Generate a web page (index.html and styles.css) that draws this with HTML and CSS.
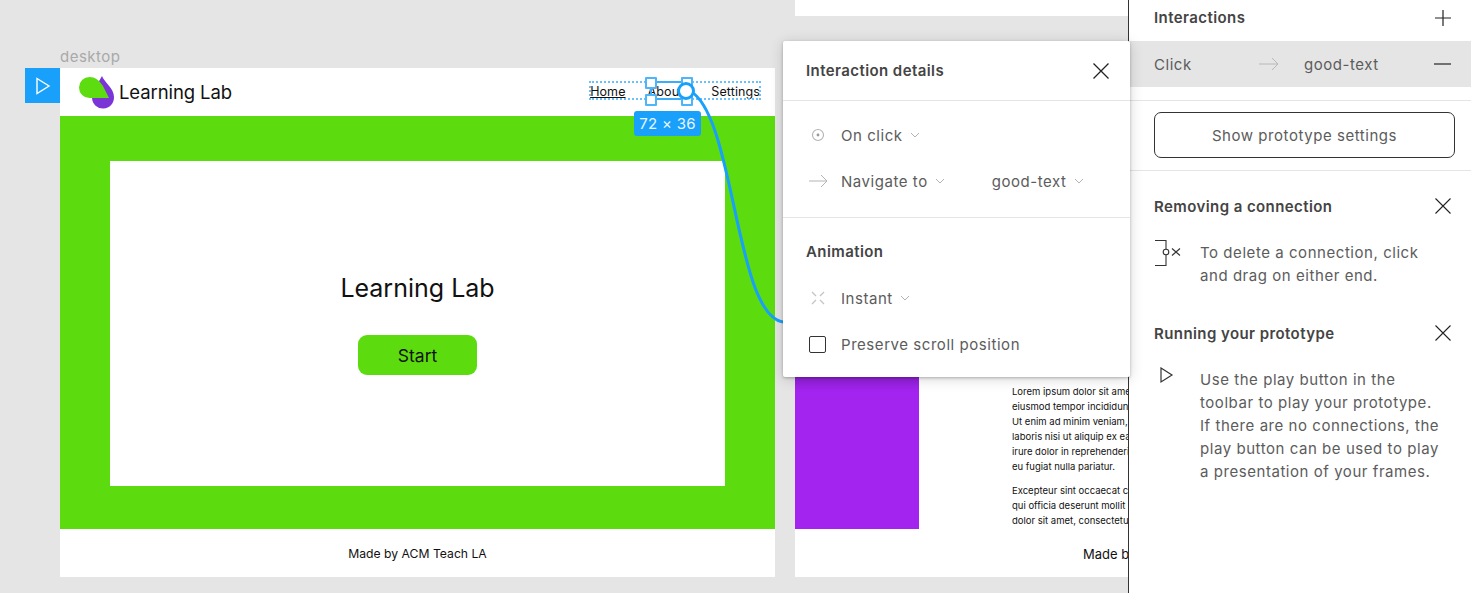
FILE: index.html
```html
<!DOCTYPE html>
<html lang="en">
  <head>
    <meta charset="UTF-8" />
    <title>Prototype</title>
    <link rel="stylesheet" href="styles.css">
  </head>
  <body>
    <main class="canvas">
      <div class="stubFrame"></div>
      <div class="frameLabel">desktop</div>
      <div class="flowTag">
        <svg width="16" height="18" viewBox="0 0 16 18"><path d="M2 1.500 14 9 2 16.500Z" fill="none" stroke="#fff" stroke-width="1.400"/></svg>
      </div>

      <section class="frame desktopFrame">
        <header class="siteHeader">
          <div class="brand">
            <svg width="36" height="33" viewBox="0 0 36 33">
              <path d="M23 0C25 6 35 12 35 21A11 11 0 0 1 13 22L16 12Z" fill="#7b35d6"/>
              <path d="M10.500 1C16 1 20 4 24 10L30 22H10.500A10.500 10.500 0 0 1 10.500 1Z" fill="#5ddc0f"/>
            </svg>
            <span>Learning Lab</span>
          </div>
          <nav class="siteNav">
            <a class="isCurrent">Home</a>
            <a>About</a>
            <a>Settings</a>
          </nav>
        </header>
        <div class="hero">
          <div class="heroCard">
            <h1>Learning Lab</h1>
            <div class="startBtn">Start</div>
          </div>
        </div>
        <footer class="siteFooter">Made by ACM Teach LA</footer>
      </section>

      <section class="frame textFrame">
        <div class="textBody">
          <div class="purpleCol"></div>
          <div class="lorem">
            <p>Lorem ipsum dolor sit amet, consectetur adipiscing<br>eiusmod tempor incididunt ut labore et dolore<br>Ut enim ad minim veniam, quis nostrud<br>laboris nisi ut aliquip ex ea commodo<br>irure dolor in reprehenderit in voluptate<br>eu fugiat nulla pariatur.</p>
            <p>Excepteur sint occaecat cupidatat non<br>qui officia deserunt mollit anim id est<br>dolor sit amet, consectetur adipiscing</p>
          </div>
        </div>
        <footer class="siteFooter footerShift">Made by ACM Teach LA</footer>
      </section>

      <div class="selDotted"></div>
      <div class="selBox"></div>
      <div class="handle h1"></div>
      <div class="handle h2"></div>
      <div class="handle h3"></div>
      <div class="handle h4"></div>
      <div class="sizeBadge">72 × 36</div>
      <svg class="wire" width="1471" height="593" viewBox="0 0 1471 593">
        <path d="M690 91C735 115 735 315 783 322" fill="none" stroke="#18a0fb" stroke-width="3"/>
        <circle cx="686" cy="91" r="7.500" fill="#fff" stroke="#18a0fb" stroke-width="3"/>
      </svg>
    </main>

    <aside class="popover">
      <div class="popHead">
        <span>Interaction details</span>
        <svg class="icon" width="18" height="18" viewBox="0 0 18 18"><path d="M1.500 1.500 16.500 16.500M16.500 1.500 1.500 16.500" stroke="#222" stroke-width="1.300"/></svg>
      </div>
      <div class="popSection popFirst">
        <div class="popRow">
          <span class="rowIcon"><svg class="smallIcon" width="14" height="14" viewBox="0 0 14 14"><circle cx="7" cy="7" r="5.500" fill="none" stroke="#b3b3b3" stroke-width="1.100"/><circle cx="7" cy="7" r="1.400" fill="#999"/></svg></span>
          <span>On click</span>
          <svg class="chev" width="10" height="6" viewBox="0 0 10 6"><path d="M1 1 5 5 9 1" fill="none" stroke="#b3b3b3" stroke-width="1"/></svg>
        </div>
        <div class="popRow">
          <span class="rowIcon"><svg width="20" height="14" viewBox="0 0 20 14"><path d="M1 7H19M13 1 19 7 13 13" fill="none" stroke="#b3b3b3" stroke-width="1"/></svg></span>
          <span>Navigate to</span>
          <svg class="chev" width="10" height="6" viewBox="0 0 10 6"><path d="M1 1 5 5 9 1" fill="none" stroke="#b3b3b3" stroke-width="1"/></svg>
          <span class="target">good-text</span>
          <svg class="chev" width="10" height="6" viewBox="0 0 10 6"><path d="M1 1 5 5 9 1" fill="none" stroke="#b3b3b3" stroke-width="1"/></svg>
        </div>
      </div>
      <div class="popSection">
        <h3 class="popTitle">Animation</h3>
        <div class="popRow">
          <span class="rowIcon"><svg class="smallIcon" width="14" height="14" viewBox="0 0 14 14"><path d="M1 1 5 5M13 1 9 5M1 13 5 9M13 13 9 9" fill="none" stroke="#c4c4c4" stroke-width="1.300"/></svg></span>
          <span>Instant</span>
          <svg class="chev" width="10" height="6" viewBox="0 0 10 6"><path d="M1 1 5 5 9 1" fill="none" stroke="#b3b3b3" stroke-width="1"/></svg>
        </div>
        <div class="popRow">
          <span class="rowIcon"><span class="checkbox"></span></span>
          <span>Preserve scroll position</span>
        </div>
      </div>
    </aside>

    <aside class="panel">
      <div class="panelTop">
        <div class="panelHead">
          <span>Interactions</span>
          <svg width="16" height="16" viewBox="0 0 16 16"><path d="M8 0V16M0 8H16" stroke="#222" stroke-width="1.200"/></svg>
        </div>
        <div class="interaction">
          <span class="trigger">Click</span>
          <svg class="arrow" width="20" height="14" viewBox="0 0 20 14"><path d="M0 7H19M13 1 19 7 13 13" fill="none" stroke="#b8b8b8" stroke-width="1"/></svg>
          <span class="dest">good-text</span>
          <svg class="minus" width="17" height="2" viewBox="0 0 17 2"><path d="M0 1H17" stroke="#222" stroke-width="1.200"/></svg>
        </div>
      </div>
      <div class="panelBtnWrap">
        <div class="protoBtn">Show prototype settings</div>
      </div>
      <div class="tips">
        <div class="tip">
          <div class="tipHead">
            <span>Removing a connection</span>
            <svg width="16" height="16" viewBox="0 0 16 16"><path d="M.5.5 15.500 15.500M15.500.5.5 15.500" stroke="#222" stroke-width="1.100"/></svg>
          </div>
          <div class="tipBody">
            <svg class="tipIcon" width="28" height="28" viewBox="0 0 28 28"><path d="M1 1.500H12V10M12 16V26.500H1" fill="none" stroke="#333" stroke-width="1.100"/><circle cx="12" cy="13" r="2.800" fill="none" stroke="#333" stroke-width="1.100"/><path d="M18 9.500 26 16.500M26 9.500 18 16.500" stroke="#333" stroke-width="1.100"/></svg>
            <p>To delete a connection, click<br>and drag on either end.</p>
          </div>
        </div>
        <div class="tip">
          <div class="tipHead">
            <span>Running your prototype</span>
            <svg width="16" height="16" viewBox="0 0 16 16"><path d="M.5.5 15.500 15.500M15.500.5.5 15.500" stroke="#222" stroke-width="1.100"/></svg>
          </div>
          <div class="tipBody">
            <svg class="tipIcon" width="28" height="18" viewBox="0 0 28 18"><path d="M7 2 18 9 7 16Z" fill="none" stroke="#333" stroke-width="1.200"/></svg>
            <p>Use the play button in the<br>toolbar to play your prototype.<br>If there are no connections, the<br>play button can be used to play<br>a presentation of your frames.</p>
          </div>
        </div>
      </div>
    </aside>
  </body>
</html>
```

FILE: styles.css
```css
html,
body {
  margin: 0;
  padding: 0;
  height: 593px;
  overflow: hidden;
}

body {
  position: relative;
  display: flex;
  background: #e5e5e5;
  font-family: Inter, "Liberation Sans", sans-serif;
  font-size: 15px;
  letter-spacing: 0.55px;
  color: #5c5c5c;
}

/* free canvas */
.canvas {
  position: relative;
  flex: 1;
  min-width: 0;
  overflow: hidden;
}

.stubFrame {
  position: absolute;
  left: 795px;
  top: 0;
  width: 340px;
  height: 16px;
  background: #fff;
}

.frameLabel {
  position: absolute;
  left: 60px;
  top: 48px;
  line-height: 18px;
  letter-spacing: 0.5px;
  color: #a9a9a9;
}

.flowTag {
  position: absolute;
  left: 25px;
  top: 68px;
  width: 35px;
  height: 35px;
  display: flex;
  align-items: center;
  justify-content: center;
  background: #18a0fb;
}

.frame {
  position: absolute;
  top: 68px;
  height: 509px;
  display: flex;
  flex-direction: column;
  background: #fff;
  letter-spacing: 0;
  color: #111;
}

.desktopFrame {
  left: 60px;
  width: 715px;
}

.textFrame {
  left: 795px;
  width: 340px;
  overflow: hidden;
}

.siteHeader {
  height: 48px;
  display: flex;
  align-items: center;
  justify-content: space-between;
  padding: 0 15px 0 19px;
  box-sizing: border-box;
}

.brand {
  display: flex;
  align-items: center;
  gap: 4px;
  font-size: 18.500px;
  letter-spacing: -0.1px;
}

.siteNav {
  display: flex;
  gap: 22px;
  padding-bottom: 2px;
  font-size: 12.500px;
  letter-spacing: 0.1px;
}

.siteNav a:last-child {
  margin-left: 6px;
}

.isCurrent {
  text-decoration: underline;
}

.hero {
  flex: 1;
  display: flex;
  align-items: flex-start;
  justify-content: center;
  padding-top: 45px;
  background: #5cdc0e;
}

.heroCard {
  width: 615px;
  height: 325px;
  box-sizing: border-box;
  padding-top: 110px;
  display: flex;
  flex-direction: column;
  align-items: center;
  background: #fff;
}

.heroCard h1 {
  margin: 0;
  font-size: 25px;
  line-height: 34px;
  font-weight: 400;
}

.startBtn {
  margin-top: 30px;
  width: 119px;
  height: 40px;
  line-height: 42px;
  text-align: center;
  border-radius: 9px;
  background: #5cdc0e;
  font-size: 17.500px;
}

.siteFooter {
  height: 48px;
  line-height: 50px;
  text-align: center;
  font-size: 12.200px;
}

.footerShift {
  padding-left: 288px;
  white-space: nowrap;
  text-align: left;
  font-size: 13px;
}

.textBody {
  flex: 1;
  min-height: 0;
  display: flex;
  overflow: hidden;
}

.purpleCol {
  width: 124px;
  flex: none;
  background: linear-gradient(#8f20d6 309px, #a224ee 322px);
}

.lorem {
  margin-left: 93px;
  padding-top: 316px;
  font-size: 9.500px;
  line-height: 15px;
  white-space: nowrap;
}

.lorem p {
  margin: 0 0 9px;
}

/* selection overlays */
.selDotted {
  position: absolute;
  left: 589px;
  top: 81px;
  width: 168px;
  height: 15px;
  border: 2px dotted #6cc1fb;
}

.selBox {
  position: absolute;
  left: 650px;
  top: 81px;
  width: 33px;
  height: 15px;
  border: 2px solid #3aaefb;
}

.handle {
  position: absolute;
  width: 8px;
  height: 8px;
  background: #fff;
  border: 2px solid #4db5fb;
  border-radius: 1px;
}

.h1 { left: 645px; top: 77px; }
.h2 { left: 681px; top: 77px; }
.h3 { left: 645px; top: 94px; }
.h4 { left: 681px; top: 94px; }

.sizeBadge {
  position: absolute;
  left: 634px;
  top: 111px;
  width: 67px;
  height: 25px;
  line-height: 25px;
  text-align: center;
  letter-spacing: 0.3px;
  border-radius: 3px;
  background: #18a0fb;
  color: #e8f5ff;
}

.wire {
  position: absolute;
  left: 0;
  top: 0;
  pointer-events: none;
}

/* interaction popover */
.popover {
  position: absolute;
  left: 783px;
  top: 41px;
  z-index: 10;
  width: 347px;
  height: 336px;
  background: #fff;
  border-radius: 2px;
  box-shadow: 0 1px 3px rgba(0, 0, 0, 0.25), 0 2px 14px rgba(0, 0, 0, 0.16);
}

.popHead {
  height: 59px;
  display: flex;
  align-items: center;
  justify-content: space-between;
  padding: 0 20px 0 23px;
  border-bottom: 1px solid #e5e5e5;
  font-weight: 600;
  letter-spacing: 0.42px;
  color: #444;
}

.popSection {
  padding: 0 0 10px;
}

.popFirst {
  padding: 11px 0 13px;
  border-bottom: 1px solid #e5e5e5;
}

.popTitle {
  margin: 0;
  height: 57px;
  box-sizing: border-box;
  padding: 16px 0 0 23px;
  font-size: 15px;
  line-height: 36px;
  font-weight: 600;
  letter-spacing: 0.42px;
  color: #444;
}

.popRow {
  height: 46px;
  display: flex;
  align-items: center;
  padding-left: 24px;
}

.rowIcon {
  width: 34px;
  flex: none;
  display: flex;
  align-items: center;
  padding-left: 1px;
  box-sizing: border-box;
}

.smallIcon {
  margin-left: 3px;
}

.chev {
  margin-left: 7px;
}

.target {
  margin-left: 47px;
}

.checkbox {
  width: 15px;
  height: 15px;
  border: 1px solid #333;
  border-radius: 2px;
  margin-left: 1px;
}

/* right panel */
.panel {
  width: 343px;
  flex: none;
  box-sizing: border-box;
  border-left: 1px solid #333;
  background: #fff;
  position: relative;
}

.panelTop {
  height: 101px;
  box-sizing: border-box;
  border-bottom: 1px solid #e5e5e5;
}

.panelHead {
  height: 35px;
  margin-bottom: 6px;
  display: flex;
  align-items: center;
  justify-content: space-between;
  padding: 0 20px 0 25px;
  font-weight: 600;
  letter-spacing: 0.42px;
  color: #444;
}

.interaction {
  height: 46px;
  display: flex;
  align-items: center;
  padding-left: 25px;
  background: #e5e5e5;
}

.trigger {
  width: 105px;
}

.dest {
  margin-left: 25px;
}

.minus {
  margin-left: auto;
  margin-right: 20px;
}

.panelBtnWrap {
  padding: 11px 16px 12px 25px;
  border-bottom: 1px solid #e5e5e5;
}

.protoBtn {
  height: 44px;
  line-height: 46px;
  text-align: center;
  border: 1px solid #333;
  border-radius: 7px;
}

.tips {
  padding: 24px 20px 0 25px;
  display: flex;
  flex-direction: column;
  gap: 35px;
}

.tipHead {
  height: 22px;
  display: flex;
  align-items: center;
  justify-content: space-between;
  font-weight: 600;
  letter-spacing: 0.42px;
  color: #444;
}

.tipBody {
  margin-top: 24px;
  display: flex;
  align-items: flex-start;
}

.tipIcon {
  flex: none;
  margin-right: 18px;
  margin-top: -2px;
}

.tipBody p {
  margin: 0;
  line-height: 23px;
}
```
